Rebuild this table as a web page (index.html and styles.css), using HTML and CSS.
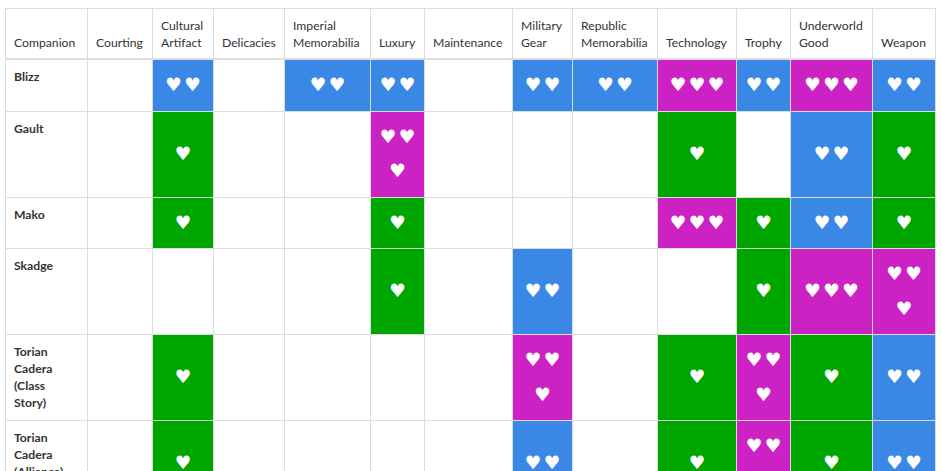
FILE: index.html
```html
<!DOCTYPE html>
<html lang="en">
<head>
<meta charset="utf-8">
<title>Companion Gifts</title>
<link rel="stylesheet" href="styles.css">
</head>
<body>
<table class="gifts">
  <colgroup>
    <col class="c-companion"><col class="c-courting"><col class="c-cultural"><col class="c-delicacies"><col class="c-imperial"><col class="c-luxury"><col class="c-maintenance"><col class="c-military"><col class="c-republic"><col class="c-technology"><col class="c-trophy"><col class="c-underworld"><col class="c-weapon">
  </colgroup>
  <thead>
    <tr>
      <th>Companion</th><th>Courting</th><th>Cultural Artifact</th><th>Delicacies</th><th>Imperial Memorabilia</th><th>Luxury</th><th>Maintenance</th><th>Military Gear</th><th>Republic Memorabilia</th><th>Technology</th><th>Trophy</th><th>Underworld Good</th><th>Weapon</th>
    </tr>
  </thead>
  <tbody>
    <tr>
      <td class="name">Blizz</td>
      <td></td>
      <td class="h blue">♥ ♥</td>
      <td></td>
      <td class="h blue">♥ ♥</td>
      <td class="h blue">♥ ♥</td>
      <td></td>
      <td class="h blue">♥ ♥</td>
      <td class="h blue">♥ ♥</td>
      <td class="h pink">♥ ♥ ♥</td>
      <td class="h blue">♥ ♥</td>
      <td class="h pink">♥ ♥ ♥</td>
      <td class="h blue">♥ ♥</td>
    </tr>
    <tr>
      <td class="name">Gault</td>
      <td></td>
      <td class="h green">♥</td>
      <td></td>
      <td></td>
      <td class="h pink">♥ ♥ ♥</td>
      <td></td>
      <td></td>
      <td></td>
      <td class="h green">♥</td>
      <td></td>
      <td class="h blue">♥ ♥</td>
      <td class="h green">♥</td>
    </tr>
    <tr>
      <td class="name">Mako</td>
      <td></td>
      <td class="h green">♥</td>
      <td></td>
      <td></td>
      <td class="h green">♥</td>
      <td></td>
      <td></td>
      <td></td>
      <td class="h pink">♥ ♥ ♥</td>
      <td class="h green">♥</td>
      <td class="h blue">♥ ♥</td>
      <td class="h green">♥</td>
    </tr>
    <tr>
      <td class="name">Skadge</td>
      <td></td>
      <td></td>
      <td></td>
      <td></td>
      <td class="h green">♥</td>
      <td></td>
      <td class="h blue">♥ ♥</td>
      <td></td>
      <td></td>
      <td class="h green">♥</td>
      <td class="h pink">♥ ♥ ♥</td>
      <td class="h pink">♥ ♥ ♥</td>
    </tr>
    <tr>
      <td class="name">Torian Cadera (Class Story)</td>
      <td></td>
      <td class="h green">♥</td>
      <td></td>
      <td></td>
      <td></td>
      <td></td>
      <td class="h pink">♥ ♥ ♥</td>
      <td></td>
      <td class="h green">♥</td>
      <td class="h pink">♥ ♥ ♥</td>
      <td class="h green">♥</td>
      <td class="h blue">♥ ♥</td>
    </tr>
    <tr>
      <td class="name">Torian Cadera (Alliance)</td>
      <td></td>
      <td class="h green">♥</td>
      <td></td>
      <td></td>
      <td></td>
      <td></td>
      <td class="h blue">♥ ♥</td>
      <td></td>
      <td class="h green">♥</td>
      <td class="h pink">♥ ♥ ♥</td>
      <td class="h green">♥</td>
      <td class="h blue">♥ ♥</td>
    </tr>
  </tbody>
</table>
</body>
</html>
```
FILE: styles.css
```css
body {
  margin: 8px 6px 8px 5px;
  background: #fff;
  font-family: Lato, "Liberation Sans", sans-serif;
  font-size: 12.2px;
  line-height: 17px;
  color: #333;
}

.gifts {
  border-collapse: collapse;
  table-layout: fixed;
  width: 931px;
}

.c-companion { width: 82px; }
.c-courting { width: 65px; }
.c-cultural { width: 61px; }
.c-delicacies { width: 71px; }
.c-imperial { width: 86px; }
.c-luxury { width: 54px; }
.c-maintenance { width: 88px; }
.c-military { width: 60px; }
.c-republic { width: 85px; }
.c-technology { width: 79px; }
.c-trophy { width: 54px; }
.c-underworld { width: 82px; }
.c-weapon { width: 63px; }

.gifts th,
.gifts td {
  border: 1px solid #dcdcdc;
  padding: 8px;
}

.gifts th {
  font-weight: 400;
  text-align: left;
  vertical-align: bottom;
  border-bottom: 2px solid #dcdcdc;
  padding-bottom: 7px;
}

.gifts td {
  vertical-align: top;
}

.gifts td.name {
  font-weight: 700;
}

.gifts td.h {
  vertical-align: middle;
  text-align: center;
  color: #fff;
  font-family: "DejaVu Sans", sans-serif;
  font-size: 18.5px;
  line-height: 34.5px;
  word-spacing: -3.5px;
}

.blue { background: #3a88e6; }
.pink { background: #cc22c4; }
.green { background: #00a600; }
```
